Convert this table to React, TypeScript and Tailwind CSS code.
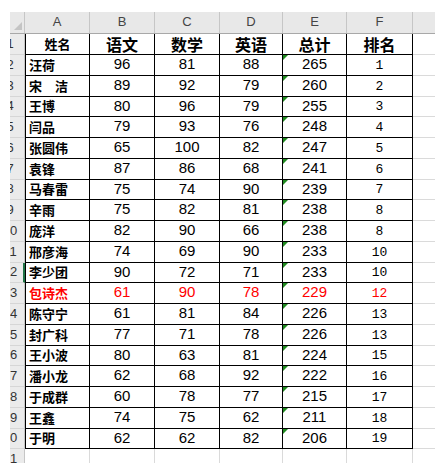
import React from 'react'

const rows: [string, number, number, number, number, number][] = [
  ['汪荷', 96, 81, 88, 265, 1],
  ['宋　洁', 89, 92, 79, 260, 2],
  ['王博', 80, 96, 79, 255, 3],
  ['闫品', 79, 93, 76, 248, 4],
  ['张圆伟', 65, 100, 82, 247, 5],
  ['袁锋', 87, 86, 68, 241, 6],
  ['马春雷', 75, 74, 90, 239, 7],
  ['辛雨', 75, 82, 81, 238, 8],
  ['庞洋', 82, 90, 66, 238, 8],
  ['邢彦海', 74, 69, 90, 233, 10],
  ['李少团', 90, 72, 71, 233, 10],
  ['包诗杰', 61, 90, 78, 229, 12],
  ['陈守宁', 61, 81, 84, 226, 13],
  ['封广科', 77, 71, 78, 226, 13],
  ['王小波', 80, 63, 81, 224, 15],
  ['潘小龙', 62, 68, 92, 222, 16],
  ['于成群', 60, 78, 77, 215, 17],
  ['王鑫', 74, 75, 62, 211, 18],
  ['于明', 62, 62, 82, 206, 19],
]

const cjk = "font-['Microsoft_YaHei','Noto_Sans_CJK_SC',sans-serif]"
const num = "font-['Liberation_Sans','Noto_Sans_CJK_SC',sans-serif]"

// row number header, clipped on the left like the original crop
function RowHead({ n, h, active }: { n: number; h: string; active?: boolean }) {
  return (
    <div
      className={`w-[15px] shrink-0 overflow-hidden bg-[#ebebeb] border-b border-[#d6d6d6] flex items-center ${h} ${
        active ? 'border-r-2 border-r-[#217346]' : 'border-r border-r-[#c6c6c6]'
      }`}
    >
      <span className={`ml-[-14px] w-[28px] shrink-0 text-center text-[13px] text-[#333] ${num}`}>{n}</span>
    </div>
  )
}

function Extra({ h }: { h: string }) {
  return <div className={`w-[22px] shrink-0 border-b border-[#dadada] ${h}`} />
}

export default function App() {
  const colHeads = [
    { l: 'A', w: 'w-[65px]' },
    { l: 'B', w: 'w-[65px]' },
    { l: 'C', w: 'w-[65px]' },
    { l: 'D', w: 'w-[63px]' },
    { l: 'E', w: 'w-[64px]' },
    { l: 'F', w: 'w-[66px]' },
  ]

  return (
    <div className="w-[446px] h-[476px] bg-white pt-[12px] pl-[10px] overflow-hidden">
      <div className="w-[425px] h-[451px] overflow-hidden flex flex-col">
        {/* column letters */}
        <div className="flex h-[22px] bg-[#e8e8e8] border-b border-[#a8a8a8]">
          <div className="w-[15px] shrink-0 relative border-r border-[#c6c6c6]">
            <div className="absolute right-[2px] bottom-[3px] w-0 h-0 border-l-[8px] border-l-transparent border-b-[8px] border-b-[#c4c4c4]" />
          </div>
          {colHeads.map(c => (
            <div
              key={c.l}
              className={`${c.w} shrink-0 border-r border-[#c6c6c6] flex items-end justify-center pb-[1px] text-[13px] text-[#444] ${num}`}
            >
              {c.l}
            </div>
          ))}
          <div className="w-[22px] shrink-0" />
        </div>

        {/* row 1: titles */}
        <div className="flex">
          <RowHead n={1} h="h-[21px]" />
          <div className={`w-[65px] shrink-0 h-[21px] border-x border-b border-black flex items-center justify-center font-bold text-[13px] text-black ${cjk}`}>
            姓名
          </div>
          {['语文', '数学', '英语', '总计', '排名'].map((t, i) => (
            <div
              key={t}
              className={`${colHeads[i + 1].w} shrink-0 h-[21px] border-r border-b border-black flex items-center justify-center font-bold text-[16px] leading-none text-black ${cjk}`}
            >
              {t}
            </div>
          ))}
          <Extra h="h-[21px]" />
        </div>

        {rows.map((r, i) => {
          const h = i % 4 === 2 ? 'h-[20px]' : 'h-[21px]'
          const red = r[0] === '包诗杰'
          const color = red ? 'text-[#ff0000]' : 'text-black'
          return (
            <div key={i} className="flex">
              <RowHead n={i + 2} h={h} active={i + 2 === 12} />
              <div className={`w-[65px] shrink-0 ${h} border-x border-b border-black flex items-center pl-[3px] font-bold text-[13px] whitespace-pre ${color} ${cjk}`}>
                {r[0]}
              </div>
              {[r[1], r[2], r[3]].map((v, j) => (
                <div
                  key={j}
                  className={`${colHeads[j + 1].w} shrink-0 ${h} border-r border-b border-black flex items-center justify-center text-[15px] ${color} ${num}`}
                >
                  {v}
                </div>
              ))}
              <div className={`w-[64px] shrink-0 ${h} border-r border-b border-black relative flex items-center justify-center text-[15px] ${color} ${num}`}>
                <div className="absolute left-0 top-0 w-0 h-0 border-t-[5px] border-t-[#1f8a1f] border-r-[5px] border-r-transparent" />
                {r[4]}
              </div>
              <div className={`w-[66px] shrink-0 ${h} border-r border-b border-black flex items-center justify-center pt-[2px] text-[13px] ${color} font-['Liberation_Mono',monospace]`}>
                {r[5]}
              </div>
              <Extra h={h} />
            </div>
          )
        })}

        {/* row 21, empty */}
        <div className="flex">
          <RowHead n={21} h="h-[21px]" />
          {colHeads.map(c => (
            <div key={c.l} className={`${c.w} shrink-0 h-[21px] border-r border-b border-[#dadada]`} />
          ))}
          <Extra h="h-[21px]" />
        </div>
      </div>
    </div>
  )
}
